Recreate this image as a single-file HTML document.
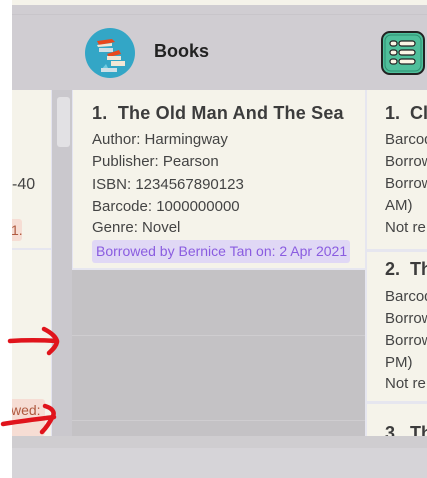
<!DOCTYPE html>
<html><head><meta charset="utf-8"><style>
*{margin:0;padding:0;box-sizing:border-box}
body{width:427px;height:478px;overflow:hidden;background:#fff;font-family:"Liberation Sans",sans-serif;position:relative;color:#444}
.a{position:absolute;white-space:nowrap}
.t{font-size:15px;line-height:22px}
.h{font-size:18px;font-weight:bold;color:#3c3c3c}
</style></head><body>
<div class="a" style="left:12px;top:0;width:415px;height:5px;background:#f5f3ea"></div>
<div class="a" style="left:12px;top:5px;width:415px;height:85px;background:#d0cdd2"></div>
<div class="a" style="left:12px;top:14px;width:415px;height:1px;background:#c8c5ca"></div>
<svg class="a" style="left:85px;top:28px" width="50" height="50" viewBox="0 0 50 50">
<circle cx="25" cy="25" r="25" fill="#33a6c6"/>
<path d="M12 13 L27 11 L30 14 L14 17Z" fill="#e8481c"/>
<path d="M12 17 L27 15 L27 18 L13 19Z" fill="#f1e7d6"/>
<rect x="14" y="20" width="14" height="4" fill="#cfe0e6"/>
<path d="M22 26 L34 22 L36 26 L24 29Z" fill="#e8481c"/>
<rect x="22" y="28" width="14" height="4" fill="#f1e7d6"/>
<rect x="26" y="33" width="14" height="5" fill="#f1e7d6"/>
<path d="M16 42 L21 36 L24 42Z" fill="#6fcbe0"/>
<rect x="16" y="40" width="16" height="4" fill="#cfe0e6"/>
</svg>
<div class="a" style="left:154px;top:41px;font-size:18px;font-weight:bold;color:#222">Books</div>
<svg class="a" style="left:381px;top:31px" width="44" height="44" viewBox="0 0 44 44">
<rect x="1" y="1" width="42" height="42" rx="8" fill="#4fbf9b" stroke="#222" stroke-width="2"/>
<rect x="4" y="4" width="36" height="36" rx="6" fill="none" stroke="#2d8f70" stroke-width="1"/>
<g fill="#fbf6e6" stroke="#222" stroke-width="1.2">
<rect x="9" y="10" width="7" height="5" rx="2.5"/><rect x="18" y="10" width="16" height="5" rx="2.5"/>
<rect x="9" y="19" width="7" height="5" rx="2.5"/><rect x="18" y="19" width="16" height="5" rx="2.5"/>
<rect x="9" y="28" width="7" height="5" rx="2.5"/><rect x="18" y="28" width="16" height="5" rx="2.5"/>
</g></svg>
<div class="a" style="left:12px;top:90px;width:40px;height:346px;background:#f5f3ea;overflow:hidden;border-right:1px solid #e4e4f0">
<div class="a t" style="left:0;top:84px;font-size:16px">-40</div>
<div class="a" style="left:-6px;top:129px;width:16px;height:22px;background:#f6ddd4;border-radius:3px;color:#b05a40;font-size:14px;line-height:22px;padding-left:5px">1.</div>
<div class="a" style="left:0;top:158px;width:40px;height:2px;background:#e6e6ef"></div>
<div class="a" style="left:-20px;top:309px;width:53px;height:37px;background:#f6ddd4;border-radius:3px;color:#b05a40;font-size:14px;line-height:22px;padding-left:19px">wed:</div>
</div>
<div class="a" style="left:52px;top:90px;width:20px;height:346px;background:#cac8cd"></div>
<div class="a" style="left:57px;top:97px;width:13px;height:50px;background:#e2e1e4;border-radius:3px"></div>
<div class="a" style="left:72px;top:90px;width:293px;height:346px;background:#c4c2c5"></div>
<div class="a" style="left:72px;top:335px;width:293px;height:1px;background:#cfcdd0"></div>
<div class="a" style="left:72px;top:420px;width:293px;height:1px;background:#cfcdd0"></div>
<div class="a" style="left:72px;top:90px;width:293px;height:180px;background:#f5f3ea;border-bottom:2px solid #e6e6ef;border-left:1px solid #e4e4f0">
<div class="a h" style="left:19px;top:13px;letter-spacing:0.2px">1.&nbsp; The Old Man And The Sea</div>
<div class="a t" style="left:19px;top:39px">Author: Harmingway</div>
<div class="a t" style="left:19px;top:61px">Publisher: Pearson</div>
<div class="a t" style="left:19px;top:84px">ISBN: 1234567890123</div>
<div class="a t" style="left:19px;top:106px">Barcode: 1000000000</div>
<div class="a t" style="left:19px;top:127px">Genre: Novel</div>
<div class="a" style="left:19px;top:150px;width:258px;height:23px;background:#e0d8f5;border-radius:3px;color:#8a5ce0;font-size:14px;line-height:23px;padding-left:4px">Borrowed by Bernice Tan on: 2 Apr 2021</div>
</div>
<div class="a" style="left:365px;top:90px;width:62px;height:346px;background:#f5f3ea;overflow:hidden;border-left:2px solid #e6e6ef">
<div class="a h" style="left:18px;top:13px">1.&nbsp; Cl</div>
<div class="a t" style="left:18px;top:39px">Barcode</div>
<div class="a t" style="left:18px;top:61px">Borrowed</div>
<div class="a t" style="left:18px;top:83px">Borrowed</div>
<div class="a t" style="left:18px;top:105px">AM)</div>
<div class="a t" style="left:18px;top:127px">Not re</div>
<div class="a" style="left:0;top:159px;width:62px;height:3px;background:#e6e6ef"></div>
<div class="a h" style="left:18px;top:169px">2.&nbsp; Th</div>
<div class="a t" style="left:18px;top:196px">Barcode</div>
<div class="a t" style="left:18px;top:218px">Borrowed</div>
<div class="a t" style="left:18px;top:240px">Borrowed</div>
<div class="a t" style="left:18px;top:262px">PM)</div>
<div class="a t" style="left:18px;top:283px">Not re</div>
<div class="a" style="left:0;top:311px;width:62px;height:3px;background:#e6e6ef"></div>
<div class="a h" style="left:18px;top:333px">3.&nbsp; Th</div>
</div>
<div class="a" style="left:12px;top:436px;width:415px;height:12px;background:#cfcdd0"></div>
<div class="a" style="left:12px;top:448px;width:415px;height:30px;background:#d6d4d8"></div>
<svg class="a" style="left:0;top:300px" width="70" height="140" viewBox="0 0 70 140">
<g fill="none" stroke="#e0141c" stroke-width="4.5" stroke-linecap="round" stroke-linejoin="round">
<path d="M10 41 C25 40 40 40 57 41"/><path d="M44 29 C52 33 57 38 57 42 C56 47 52 50 49 53"/>
<path d="M3 124 C20 121 38 119 54 117"/><path d="M45 106 C52 108 55 112 53 116 C50 122 46 128 42 132"/>
</g></svg>
</body></html>
